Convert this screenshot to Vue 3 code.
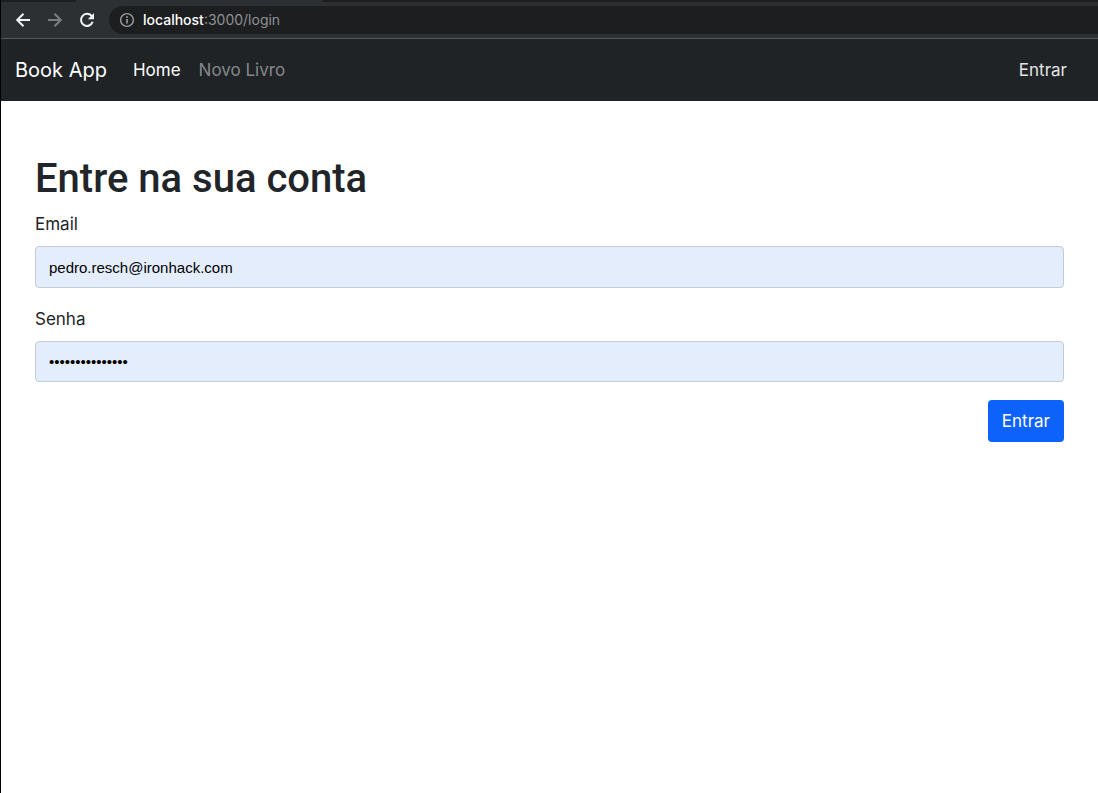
<script setup>
import { ref } from 'vue'

const address = ref('localhost:3000/login')
const email = ref('pedro.resch@ironhack.com')
const password = ref('bookapppassword')
</script>

<template>
  <div class="window">
    <header class="browser">
      <div class="tabs">
        <span class="tab tab-first"></span>
        <span class="tab-active"></span>
        <span class="tab tab-rest"></span>
      </div>
      <div class="toolbar">
        <button class="tool" type="button" aria-label="Back">
          <svg viewBox="0 0 16 16" fill="none" stroke="#f1f3f4" stroke-width="2">
            <path d="M15 8H2.5M8.5 1.7L2.2 8l6.3 6.3" />
          </svg>
        </button>
        <button class="tool" type="button" aria-label="Forward">
          <svg viewBox="0 0 16 16" fill="none" stroke="#7b7d80" stroke-width="2">
            <path d="M1 8h12.5M7.5 1.7L13.8 8l-6.3 6.3" />
          </svg>
        </button>
        <button class="tool" type="button" aria-label="Reload">
          <svg viewBox="0 0 16 16">
            <path d="M12.6 4A6 6 0 1 0 13.7 9.8" fill="none" stroke="#f1f3f4" stroke-width="2" />
            <path d="M15 1v6.2H8.8z" fill="#f1f3f4" />
          </svg>
        </button>
        <div class="address">
          <svg class="info" viewBox="0 0 16 16" fill="none" stroke="#9aa0a6">
            <circle cx="8" cy="8" r="6.4" stroke-width="1.4" />
            <path d="M8 7v4.5M8 4.3v1.6" stroke-width="1.6" />
          </svg>
          <span class="url"><b>{{ address.split(':')[0] }}</b>:{{ address.split(':')[1] }}</span>
        </div>
      </div>
    </header>

    <nav class="navbar">
      <a class="brand" href="#">Book App</a>
      <a class="link active" href="#">Home</a>
      <a class="link" href="#">Novo Livro</a>
      <a class="link active enter" href="#">Entrar</a>
    </nav>

    <main class="page">
      <h1>Entre na sua conta</h1>
      <form @submit.prevent>
        <div class="field">
          <label for="email">Email</label>
          <input id="email" v-model="email" type="email" autocomplete="username" />
        </div>
        <div class="field">
          <label for="password">Senha</label>
          <input id="password" v-model="password" type="password" autocomplete="current-password" />
        </div>
        <div class="actions">
          <button class="submit" type="submit">Entrar</button>
        </div>
      </form>
    </main>
  </div>
</template>

<style>
body {
  margin: 0;
  background: #fff;
}
</style>

<style scoped>
* {
  box-sizing: border-box;
}

.window {
  min-height: 100vh;
  border-left: 1px solid #000;
  background: #fff;
  color: #212529;
  font: 16px/24px Inter, "Liberation Sans", sans-serif;
}

.browser {
  background: #2d3033;
  border-bottom: 1px solid #55585b;
}

.tabs {
  display: flex;
  height: 2px;
}

.tab {
  background: #1d1e20;
}

.tab-first {
  width: 75px;
  border-bottom-right-radius: 4px;
}

.tab-active {
  width: 246px;
}

.tab-rest {
  flex: 1;
  border-bottom-left-radius: 4px;
}

.toolbar {
  display: flex;
  align-items: center;
  height: 36px;
  padding-left: 14px;
}

.tool {
  width: 16px;
  height: 16px;
  margin-right: 16px;
  padding: 0;
  border: 0;
  background: none;
}

.tool svg,
.info {
  display: block;
  width: 16px;
  height: 16px;
}

.address {
  display: flex;
  flex: 1;
  align-items: center;
  gap: 8px;
  height: 28px;
  margin-left: -2px;
  padding-left: 10px;
  border-radius: 14px 0 0 14px;
  background: #1d1e20;
}

.url {
  color: #8f9296;
  font-size: 14px;
  line-height: 20px;
}

.url b {
  color: #fff;
  font-weight: 500;
}

.navbar {
  display: flex;
  align-items: center;
  height: 62px;
  padding: 0 31px 0 14px;
  background: #1f2326;
}

.brand {
  margin-right: 26px;
  color: #fff;
  font-size: 20px;
  text-decoration: none;
}

.link {
  margin-right: 18px;
  color: #85888b;
  font-size: 17px;
  text-decoration: none;
}

.active {
  color: #fff;
}

.enter {
  margin: 0 0 0 auto;
  color: #e4e5e6;
}

.page {
  padding: 53px 34px 0;
}

h1 {
  margin: 0 0 7px;
  font-family: Roboto, "Liberation Sans", sans-serif;
  font-size: 40px;
  font-weight: 500;
  line-height: 50px;
}

.field {
  margin-bottom: 18px;
}

label {
  display: block;
  margin-bottom: 9px;
  font-size: 17px;
  line-height: 26px;
}

input {
  display: block;
  width: 100%;
  height: 42px;
  padding: 0 13px;
  border: 1px solid #c5cbd2;
  border-radius: 4px;
  background: #e4edfc;
  color: #000;
  font: 15px "Liberation Sans", sans-serif;
}

input[type="password"] {
  height: 41px;
}

.actions {
  display: flex;
  justify-content: flex-end;
}

.submit {
  height: 42px;
  padding: 0 14px;
  border: 0;
  border-radius: 4px;
  background: #0d62fb;
  color: #fff;
  font: 17px Inter, "Liberation Sans", sans-serif;
}
</style>
